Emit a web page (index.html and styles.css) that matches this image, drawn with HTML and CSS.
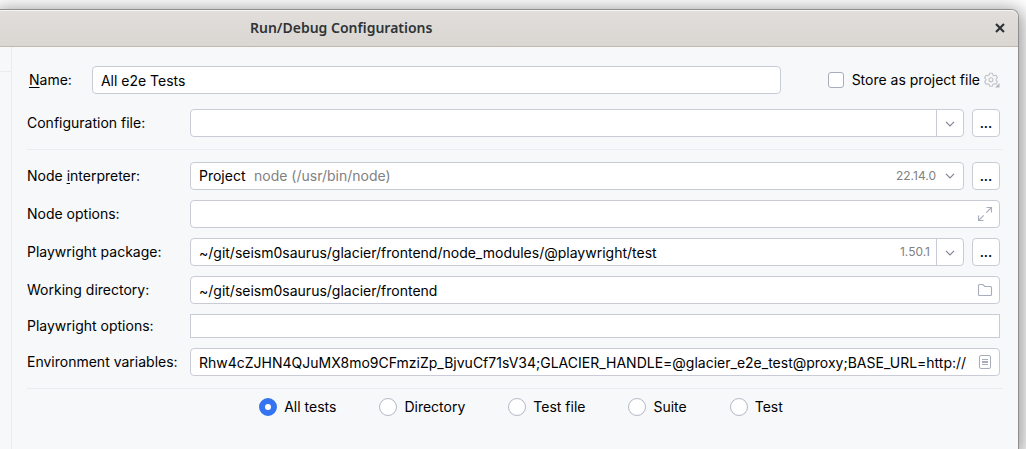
FILE: index.html
```html
<!DOCTYPE html>
<html lang="en">
<head>
<meta charset="utf-8">
<title>Run/Debug Configurations</title>
<link rel="stylesheet" href="styles.css">
</head>
<body>
<main class="dialog">
  <header class="titlebar">
    <h1 class="title">Run/Debug Configurations</h1>
    <button class="close" type="button" aria-label="Close">
      <svg width="10" height="10" viewBox="0 0 10 10"><path d="M1.8 1.8 8.2 8.2M8.2 1.8 1.8 8.2" fill="none" stroke="#2e3436" stroke-width="2.2" stroke-linecap="square"/></svg>
    </button>
  </header>
  <div class="body">
    <aside class="sidebar"><div class="sidebar-tools"></div></aside>
    <form class="form">
      <div class="name-row">
        <label for="name"><u>N</u>ame:</label>
        <input class="field name" id="name" type="text" value="All e2e Tests">
        <div class="store">
          <input class="check" type="checkbox" id="store">
          <label for="store">Store as project file</label>
          <button class="gear" type="button" aria-label="Storage settings">
            <svg width="16" height="16" viewBox="0 0 16 16"><g fill="none" stroke="#c0c1c6" stroke-width="1.1" stroke-linejoin="round"><path d="M5.6 1.3h2.8l.6 1.8 1.1.6 1.9-.4 1.4 2.4-1.3 1.4v1.3l1.3 1.4-1.4 2.4-1.9-.4-1.1.6-.6 1.8H5.6L5 12.400l-1.100-.6-1.900.4L.6 9.800l1.300-1.400V7.100L.6 5.700 2 3.300l1.900.4L5 3.100z"/><circle cx="7" cy="7.700" r="2"/></g><path d="M15.500 11v4.500H11z" fill="#b4b5ba"/></svg>
          </button>
        </div>
      </div>

      <div class="row config-row">
        <label for="config">Configuration file:</label>
        <div class="field combo">
          <input class="inner" id="config" type="text">
          <button class="arrow split" type="button" aria-label="Show configuration files"><svg width="10" height="6" viewBox="0 0 10 6"><path d="M1 .8 5 4.800 9 .8" fill="none" stroke="#818594" stroke-width="1.200"/></svg></button>
        </div>
        <button class="field more" type="button" aria-label="Browse configuration file">...</button>
      </div>

      <hr class="rule">

      <div class="rows">
        <div class="row">
          <label for="node">Node <u>i</u>nterpreter:</label>
          <div class="field picker">
            <select class="select" id="node"><option>Project</option></select>
            <span class="detail"><span class="path">node (/usr/bin/node)</span><span class="version">22.14.0</span>
            <svg width="10" height="6" viewBox="0 0 10 6"><path d="M1 .8 5 4.800 9 .8" fill="none" stroke="#818594" stroke-width="1.200"/></svg></span>
          </div>
          <button class="field more" type="button" aria-label="Browse interpreters">...</button>
        </div>
        <div class="row">
          <label for="nodeopts">Node options:</label>
          <div class="field combo wide">
            <input class="inner" id="nodeopts" type="text">
            <button class="icon" type="button" aria-label="Expand"><svg width="16" height="16" viewBox="0 0 16 16"><path d="M9.500 1.500h5v5M14.500 1.500 9.300 6.700M1.500 9.500v5h5M1.500 14.500l5.200-5.200" fill="none" stroke="#a8adbd" stroke-width="1.100"/></svg></button>
          </div>
        </div>
        <div class="row">
          <label for="package">Playwright package:</label>
          <div class="field combo">
            <input class="inner" id="package" type="text" value="~/git/seism0saurus/glacier/frontend/node_modules/@playwright/test">
            <span class="version tag">1.50.1</span>
            <button class="arrow split" type="button" aria-label="Show packages"><svg width="10" height="6" viewBox="0 0 10 6"><path d="M1 .8 5 4.800 9 .8" fill="none" stroke="#818594" stroke-width="1.200"/></svg></button>
          </div>
          <button class="field more" type="button" aria-label="Browse packages">...</button>
        </div>
        <div class="row">
          <label for="cwd">Working directory:</label>
          <div class="field combo wide">
            <input class="inner" id="cwd" type="text" value="~/git/seism0saurus/glacier/frontend">
            <button class="icon" type="button" aria-label="Browse folder"><svg width="16" height="16" viewBox="0 0 16 16"><path d="M1.500 3.500a1 1 0 0 1 1-1h3.300l2 2h5.700a1 1 0 0 1 1 1v7a1 1 0 0 1-1 1h-11a1 1 0 0 1-1-1z" fill="none" stroke="#a8adbd" stroke-width="1.100"/></svg></button>
          </div>
        </div>
        <div class="row">
          <label for="pwopts">Playwright options:</label>
          <input class="field plain wide" id="pwopts" type="text">
        </div>
        <div class="row">
          <label for="env">Environment variables:</label>
          <div class="field combo wide">
            <input class="inner" id="env" type="text" value="Rhw4cZJHN4QJuMX8mo9CFmziZp_BjvuCf71sV34;GLACIER_HANDLE=@glacier_e2e_test@proxy;BASE_URL=http://">
            <button class="icon" type="button" aria-label="Edit variables"><svg width="16" height="16" viewBox="0 0 16 16"><g fill="none" stroke="#a8adbd"><rect x="2.500" y="1.500" width="11" height="13" rx="1.500"/><path d="M5 5.500h6M5 7.500h6M5 8.500h6M5 10.500h6"/></g></svg></button>
          </div>
        </div>
      </div>

      <hr class="rule">

      <fieldset class="scope" aria-label="Tests to run">
        <label class="choice"><input class="radio" type="radio" name="scope" checked>All tests</label>
        <label class="choice"><input class="radio" type="radio" name="scope">Directory</label>
        <label class="choice"><input class="radio" type="radio" name="scope">Test file</label>
        <label class="choice"><input class="radio" type="radio" name="scope">Suite</label>
        <label class="choice"><input class="radio" type="radio" name="scope">Test</label>
      </fieldset>
    </form>
  </div>
</main>
</body>
</html>
```

FILE: styles.css
```css
* {
  box-sizing: border-box;
}

html {
  height: 100%;
  overflow: hidden;
}

body {
  display: flow-root;
  margin: 0;
  height: 100%;
  background: #fff;
  color: #000;
  font: 14px/20px Inter, sans-serif;
}

.dialog {
  display: flex;
  flex-direction: column;
  min-height: calc(100% - 9px);
  margin: 9px 7px 0 0;
  border: 1px solid #8e8e8e;
  border-width: 1px 1px 0 0;
  border-radius: 0 8px 0 0;
  background: #f7f8fa;
  box-shadow: 0 4px 18px 4px rgba(0, 0, 0, 0.4);
}

.titlebar {
  display: flex;
  align-items: center;
  justify-content: space-between;
  height: 37px;
  padding: 0 13px 0 250px;
  border-bottom: 1px solid #bfb8b1;
  border-radius: 0 7px 0 0;
  background: linear-gradient(#e1dedb, #dad6d2);
  box-shadow: inset 0 1px #f6f5f4;
}

.title {
  margin: 0;
  color: #2e3436;
  font: 600 14px/20px "Noto Sans", sans-serif;
}

button {
  padding: 0;
  border: 0;
  background: none;
  color: inherit;
  font: inherit;
}

svg {
  display: block;
}

.body {
  display: flex;
  flex: 1;
}

.sidebar {
  flex: none;
  width: 12px;
  border-right: 1px solid #ebecf0;
}

.sidebar-tools {
  height: 25px;
  border-bottom: 1px solid #ebecf0;
}

.form {
  flex: 1;
  min-width: 0;
  padding: 19px 15px 0;
}

.name-row {
  display: flex;
  align-items: center;
  margin-right: 3px;
  padding-left: 2px;
}

label {
  white-space: nowrap;
}

u {
  text-decoration: underline;
  text-underline-offset: 2px;
  text-decoration-skip-ink: none;
}

.field {
  height: 28px;
  border: 1px solid #c9ccd6;
  border-radius: 4px;
  background: #fff;
}

input,
select {
  margin: 0;
  color: inherit;
  font: inherit;
  outline: 0;
}

.name {
  flex: 1;
  min-width: 0;
  margin: 0 47px 0 20px;
  padding: 0 8px;
}

.store {
  display: flex;
  align-items: center;
}

.check {
  appearance: none;
  width: 16px;
  height: 16px;
  margin-right: 8px;
  border: 1px solid #a8adbd;
  border-radius: 3px;
  background: #fff;
}

.gear {
  margin-left: 4px;
}

.row {
  display: grid;
  grid-template-columns: 155px minmax(0, 1fr) 28px;
  column-gap: 8px;
  align-items: center;
  margin-right: 3px;
}

.config-row {
  margin-top: 15px;
}

.rule {
  height: 1px;
  margin: 12px 0;
  border: 0;
  background: #ebecf0;
}

.rows {
  display: grid;
  gap: 10px;
}

.rows + .rule {
  margin-bottom: 8px;
}

.wide {
  grid-column: 2 / 4;
}

.combo {
  display: flex;
  align-items: center;
}

.inner {
  flex: 1;
  min-width: 0;
  height: 100%;
  padding: 0;
  margin-left: 8px;
  border: 0;
  background: none;
}

.arrow {
  display: grid;
  place-items: center;
  width: 27px;
  height: 100%;
  padding-top: 2px;
}

.split {
  border-left: 1px solid #c9ccd6;
}

.icon {
  margin: 0 6px;
}

.more {
  border: 1px solid #c9ccd6;
  background: #fff;
  font-weight: 500;
}

.picker {
  display: grid;
}

.select,
.detail {
  grid-area: 1 / 1;
}

.select {
  appearance: none;
  padding: 0 8px;
  border: 0;
  background: none;
}

.detail {
  display: flex;
  align-items: center;
  padding: 0 8px 0 63px;
  pointer-events: none;
}

.path {
  flex: 1;
  color: #818181;
}

.version {
  margin-right: 9px;
  color: #818181;
  font-size: 12px;
}

.tag {
  margin-right: 6px;
}

.plain {
  height: 24px;
  border-radius: 0;
}

.scope {
  display: flex;
  justify-content: center;
  gap: 43px;
  margin: 0;
  padding: 0 0 0 12px;
  border: 0;
}

.choice {
  display: flex;
  align-items: center;
  gap: 7px;
}

.radio {
  appearance: none;
  width: 18px;
  height: 18px;
  border: 1px solid #b5b8c6;
  border-radius: 50%;
  background: #fff;
}

.radio:checked {
  border: 6px solid #3574f0;
}
```
